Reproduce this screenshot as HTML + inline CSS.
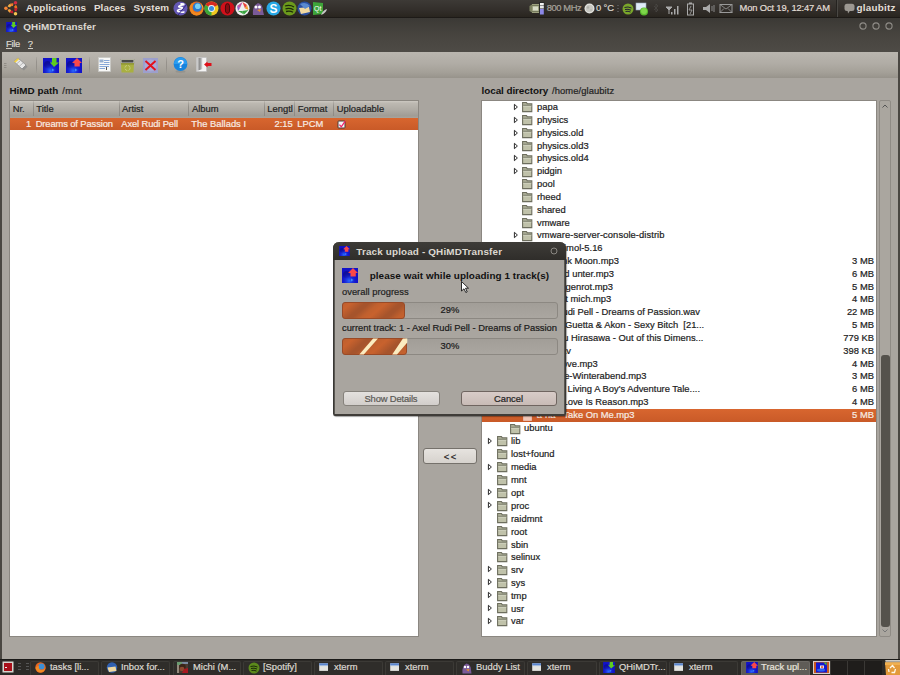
<!DOCTYPE html>
<html><head><meta charset="utf-8"><title>QHiMDTransfer</title>
<style>
html,body{margin:0;padding:0;}
body{width:900px;height:675px;overflow:hidden;position:relative;background:#a9a59f;font-family:"Liberation Sans",sans-serif;}
</style></head><body>
<div style="position:absolute;left:0px;top:0px;width:900px;height:17px;background:linear-gradient(#3d3a36,#332f2b 55%,#29251f);border-bottom:1px solid #1d1a17;"></div>
<svg style="position:absolute;left:4px;top:1px" width="16" height="16" viewBox="0 0 16 16"><path d="M4.82 6.03 A3.7 3.7 0 0 1 6.91 3.87" stroke="#f2ac44" stroke-width="2.7" fill="none"/><path d="M6.80 3.92 A3.7 3.7 0 0 1 9.20 3.71" stroke="#f07c2c" stroke-width="2.7" fill="none"/><path d="M10.96 4.73 A3.7 3.7 0 0 1 12.00 7.43" stroke="#ec7020" stroke-width="2.7" fill="none"/><path d="M12.00 7.17 A3.7 3.7 0 0 1 10.96 9.87" stroke="#c8202e" stroke-width="2.7" fill="none"/><path d="M9.20 10.89 A3.7 3.7 0 0 1 6.34 10.44" stroke="#c41c2c" stroke-width="2.7" fill="none"/><path d="M6.45 10.50 A3.7 3.7 0 0 1 4.78 8.44" stroke="#f0a040" stroke-width="2.7" fill="none"/><circle cx="1.90" cy="7.30" r="1.75" fill="#f88434"/><circle cx="11.50" cy="1.76" r="1.75" fill="#d42c44"/><circle cx="11.50" cy="12.84" r="1.75" fill="#f6c452"/></svg>
<div style="position:absolute;left:26.00px;top:2.00px;font-size:9.9px;line-height:12px;font-weight:700;color:#e2ded6;white-space:pre;letter-spacing:0.067px;">Applications</div>
<div style="position:absolute;left:94.00px;top:2.00px;font-size:9.9px;line-height:12px;font-weight:700;color:#e2ded6;white-space:pre;letter-spacing:0.037px;">Places</div>
<div style="position:absolute;left:133.50px;top:2.00px;font-size:9.9px;line-height:12px;font-weight:700;color:#e2ded6;white-space:pre;letter-spacing:0.072px;">System</div>
<svg style="position:absolute;left:173px;top:1px" width="15" height="15" viewBox="0 0 15 15"><circle cx="7.5" cy="7.5" r="7" fill="#6558b4"/><path d="M8 2.8 Q12 2.6 10.5 3.8 Q4.5 4.8 6 6 Q11 6.4 9 7.8 Q3 9 5 10.5 Q9 11.5 11 11" stroke="#fff" stroke-width="1.5" fill="none" stroke-linecap="round"/><path d="M5 14 L13.5 3.5" stroke="#2a2080" stroke-width=".9"/></svg>
<svg style="position:absolute;left:188.5px;top:1px" width="15" height="15" viewBox="0 0 15 15"><circle cx="7.5" cy="7.5" r="7" fill="#e86a1c"/><circle cx="8.3" cy="6.2" r="4.6" fill="#2a7ad0"/><circle cx="8.8" cy="5.2" r="2.8" fill="#7ad0f0"/><path d="M.6 6 Q1 13.8 7.5 14.5 Q13.5 14 14.5 8 L13.4 6.5 Q12.6 11.5 8 11.8 Q3.5 11.5 3.5 7 Q3 4 5.5 2.5 Q3 1.5 1.8 3.5Z" fill="#f08a20"/><path d="M14.5 8 Q14 4 12 2.5 L13.4 6.5Z" fill="#f4b030"/></svg>
<svg style="position:absolute;left:204px;top:1px" width="15" height="15" viewBox="0 0 15 15"><circle cx="7.5" cy="7.5" r="7" fill="#f0c820"/><path d="M7.5 7.5 L1.4 4 A7 7 0 0 1 13.6 4Z" fill="#d82a20"/><path d="M7.5 7.5 L7.5 14.5 A7 7 0 0 1 1.4 4Z" fill="#3aa83a"/><circle cx="7.5" cy="7.5" r="3.4" fill="#f4f4f4"/><circle cx="7.5" cy="7.5" r="2.5" fill="#3a8ce0"/></svg>
<svg style="position:absolute;left:220px;top:1px" width="15" height="15" viewBox="0 0 15 15"><circle cx="7.5" cy="7.5" r="7" fill="#d0101a"/><ellipse cx="7.5" cy="7.5" rx="2.6" ry="5.2" fill="#3a0a0a"/><ellipse cx="7.5" cy="7.5" rx="1.8" ry="4.6" fill="#8a0c12"/></svg>
<svg style="position:absolute;left:235px;top:1px" width="15" height="15" viewBox="0 0 15 15"><circle cx="7.5" cy="7.5" r="7" fill="#f0f0f0"/><path d="M7.5 1 L12 4 L10 7.5Z" fill="#e8453c"/><path d="M12 4 L13.5 9 L10 7.5Z" fill="#f4a030"/><path d="M13.5 9 L9 13.5 L7 10Z" fill="#3aa540"/><path d="M3 10 L9 13.5 L7 10Z" fill="#3aa540"/><path d="M2 5 L3 10 L5 7Z" fill="#8a60c8"/><path d="M2 5 L7.5 1 L5 7Z" fill="#c050a0"/></svg>
<svg style="position:absolute;left:251px;top:1px" width="14" height="15" viewBox="0 0 14 15"><path d="M2 14 Q1 5 7 2 Q12 3 12 10 L13 14Z" fill="#7a5a98"/><circle cx="5" cy="6" r="1.5" fill="#fff"/><circle cx="8.5" cy="6" r="1.5" fill="#fff"/><path d="M6 9 L10 8 L9 11Z" fill="#e8922a"/></svg>
<svg style="position:absolute;left:266px;top:1px" width="15" height="15" viewBox="0 0 15 15"><circle cx="7.5" cy="7.5" r="7" fill="#27a8e6"/><text x="7.5" y="11.8" font-size="12" font-weight="700" text-anchor="middle" fill="#fff" font-family="Liberation Sans">S</text></svg>
<svg style="position:absolute;left:282px;top:1px" width="15" height="15" viewBox="0 0 15 15"><circle cx="7.5" cy="7.5" r="7" fill="#6c9a1c"/><path d="M3 5 Q8 3.5 12 6 M3.5 7.8 Q8 6.7 11.5 8.8 M4 10.5 Q8 9.5 11 11.2" stroke="#1c2a08" stroke-width="1.3" fill="none"/></svg>
<svg style="position:absolute;left:297px;top:1px" width="15" height="15" viewBox="0 0 15 15"><circle cx="7.5" cy="7.5" r="7" fill="#2a4fa0"/><path d="M2 7 L12 6 L13 11 L4 13Z" fill="#f0d8a0"/><path d="M3 3 Q9 0 13 5 L8 8Z" fill="#5a8ad0"/></svg>
<svg style="position:absolute;left:313px;top:2px" width="15" height="14" viewBox="0 0 15 14"><path d="M0 0 L10 1 L10 12 L0 13Z" fill="#3ea53a"/><text x="1" y="9" font-size="7" fill="#fff" font-family="Liberation Sans">Qt</text><path d="M8 13 Q10 8 14 7 Q13 11 8 13Z" fill="#c8c8c8"/></svg>
<svg style="position:absolute;left:529px;top:1px" width="16" height="15" viewBox="0 0 16 15"><path d="M0.5 5 L3 3.5 L3 11.5 L0.5 10Z" fill="#7d8262"/><rect x="3" y="3" width="7.5" height="9" fill="#9ca07e"/><rect x="4" y="5.5" width="5" height="4" fill="#d8dcc8"/><path d="M3 4.5 H10.5 M3 10.5 H10.5" stroke="#6a6e52" stroke-width=".8"/><rect x="10" y="1" width="5.5" height="13" fill="#2a2a2a"/><rect x="11" y="2" width="3.8" height="2.5" fill="#f4f4f4"/><rect x="11" y="5" width="3.8" height="2.5" fill="#e8e8e8"/><rect x="11" y="8" width="3.8" height="5.5" fill="#8c88e8"/></svg>
<div style="position:absolute;left:546.70px;top:2.00px;font-size:9.4px;line-height:12px;font-weight:400;color:#a8a49c;white-space:pre;-webkit-text-stroke:0.2px #a8a49c;letter-spacing:-0.419px;">800 MHz</div>
<svg style="position:absolute;left:584px;top:3px" width="11" height="11" viewBox="0 0 11 11"><circle cx="5.5" cy="5.5" r="5" fill="#e4e4e0"/><circle cx="5.5" cy="5.5" r="3.8" fill="#c8c8c2"/><circle cx="4" cy="4.5" r="1.2" fill="#b0b0aa"/><circle cx="7" cy="7" r="1" fill="#b8b8b2"/></svg>
<div style="position:absolute;left:596.00px;top:2.00px;font-size:9.4px;line-height:12px;font-weight:400;color:#dcd8d0;white-space:pre;-webkit-text-stroke:0.2px #dcd8d0;letter-spacing:-0.115px;">0 °C</div>
<svg style="position:absolute;left:617px;top:5px" width="2" height="7" viewBox="0 0 2 7"><rect y="0" width="2" height="1" fill="#555"/><rect y="3" width="2" height="1" fill="#555"/><rect y="6" width="2" height="1" fill="#555"/></svg>
<svg style="position:absolute;left:621px;top:2px" width="14" height="14" viewBox="0 0 14 14"><circle cx="7" cy="7" r="5.5" fill="#7aa62a"/><path d="M3.5 5.5 Q7 4.2 10.5 6 M4 7.5 Q7 6.7 10 8.2 M4.5 9.5 Q7 8.8 9.5 10" stroke="#223" stroke-width="1" fill="none"/></svg>
<svg style="position:absolute;left:635px;top:2px" width="14" height="14" viewBox="0 0 14 14"><rect x="1" y="1" width="10" height="7" fill="#e0ecf8" stroke="#9ab" stroke-width=".6"/><circle cx="9" cy="9.5" r="4" fill="#5ab82e"/><circle cx="9" cy="9" r="3" fill="#7ed64a"/></svg>
<svg style="position:absolute;left:653px;top:3px" width="6" height="11" viewBox="0 0 6 11"><path d="M1 3 L5 7 L3 9 L3 1 L5 3 L1 7" stroke="#4a4844" stroke-width=".8" fill="none"/></svg>
<svg style="position:absolute;left:665px;top:4px" width="14" height="11" viewBox="0 0 14 11"><path d="M1 3 L7 3 L4 6Z M4 6 L4 10" stroke="#aaa" fill="#aaa" stroke-width="1"/><rect x="6" y="8" width="1.5" height="2.5" fill="#aaa"/><rect x="9" y="5" width="1.5" height="5.5" fill="#aaa"/><rect x="12" y="2" width="1.5" height="8.5" fill="#aaa"/></svg>
<svg style="position:absolute;left:686px;top:2px" width="9" height="14" viewBox="0 0 9 14"><rect x="1.5" y="2" width="6" height="11" fill="none" stroke="#aaa" stroke-width="1"/><rect x="3" y="0.5" width="3" height="1.5" fill="#aaa"/><path d="M5 4 L3 8 L6 8 L4 12" stroke="#aaa" fill="none" stroke-width=".8"/></svg>
<svg style="position:absolute;left:702px;top:3px" width="14" height="11" viewBox="0 0 14 11"><path d="M1 4 L4 4 L8 1 L8 10 L4 7 L1 7Z" fill="#aaa"/><path d="M10 3 L10 8 M12 2 L12 9" stroke="#888" stroke-width="1"/></svg>
<svg style="position:absolute;left:719px;top:3px" width="14" height="11" viewBox="0 0 14 11"><rect x="1" y="1.5" width="12" height="8" fill="none" stroke="#999" stroke-width="1"/><path d="M1 1.5 L7 6 L13 1.5 M1 9.5 L5 5.5 M13 9.5 L9 5.5" stroke="#999" stroke-width=".8" fill="none"/></svg>
<div style="position:absolute;left:739.50px;top:2.00px;font-size:9.4px;line-height:12px;font-weight:400;color:#e2ded6;white-space:pre;-webkit-text-stroke:0.2px #e2ded6;letter-spacing:-0.146px;">Mon Oct 19, 12:47 AM</div>
<div style="position:absolute;left:836px;top:0px;width:1px;height:17px;background:#252320;border-right:1px solid #4a4844;"></div>
<svg style="position:absolute;left:844px;top:3px" width="11" height="11" viewBox="0 0 11 11"><rect x=".5" y=".8" width="10" height="7.2" rx="2.5" fill="#9c9892"/><path d="M3.5 7 L6.5 7 L4 10.5Z" fill="#9c9892"/></svg>
<div style="position:absolute;left:856.50px;top:2.00px;font-size:9.9px;line-height:12px;font-weight:700;color:#e2ded6;white-space:pre;letter-spacing:0.241px;">glaubitz</div>
<div style="position:absolute;left:0px;top:18px;width:900px;height:34px;background:linear-gradient(#3b3935,#47443f 50%,#4e4b46);"></div>
<svg style="position:absolute;left:6px;top:22px" width="11" height="10" viewBox="0 0 16 15"><defs><radialGradient id="hb6_22" cx=".45" cy=".85" r=".55"><stop offset="0" stop-color="#2a6cff"/><stop offset="1" stop-color="#1010d0" stop-opacity="0"/></radialGradient></defs><rect width="16" height="15" fill="#1212c8"/><ellipse cx="4.5" cy="6.5" rx="3.5" ry="3.5" fill="#0c0c80" opacity=".6"/><ellipse cx="10" cy="4" rx="3" ry="2.5" fill="#2a3ae0" opacity=".6"/><rect width="16" height="15" fill="url(#hb6_22)"/><path d="M9 10.5 L11.5 12 L9 13.5Z" fill="#4aa0ff" opacity=".8"/><path d="M9 0 L13.5 0 L13.5 4.5 L16 4.5 L11 9 L7 4.5 L9 4.5Z" fill="#5ecc20"/></svg>
<div style="position:absolute;left:23.30px;top:21.00px;font-size:9.9px;line-height:12px;font-weight:700;color:#dcd8d0;white-space:pre;letter-spacing:0.051px;">QHiMDTransfer</div>
<svg style="position:absolute;left:858.3px;top:21.3px" width="10" height="10" viewBox="0 0 10 10"><circle cx="5" cy="5" r="3.1" fill="none" stroke="#8e8b86" stroke-width="1.1"/></svg>
<svg style="position:absolute;left:871.2px;top:21.3px" width="10" height="10" viewBox="0 0 10 10"><circle cx="5" cy="5" r="3.1" fill="none" stroke="#8e8b86" stroke-width="1.1"/></svg>
<svg style="position:absolute;left:884.1px;top:21.3px" width="10" height="10" viewBox="0 0 10 10"><circle cx="5" cy="5" r="3.1" fill="none" stroke="#8e8b86" stroke-width="1.1"/></svg>
<div style="position:absolute;left:6.10px;top:38.00px;font-size:9.4px;line-height:12px;font-weight:400;color:#dcd8d0;white-space:pre;-webkit-text-stroke:0.2px #dcd8d0;letter-spacing:-0.370px;">File</div>
<div style="position:absolute;left:6px;top:48px;width:6px;height:1px;background:#cfcbc3;"></div>
<div style="position:absolute;left:27.80px;top:38.00px;font-size:9.4px;line-height:12px;font-weight:400;color:#dcd8d0;white-space:pre;-webkit-text-stroke:0.2px #dcd8d0;">?</div>
<div style="position:absolute;left:28px;top:48px;width:5px;height:1px;background:#cfcbc3;"></div>
<div style="position:absolute;left:0px;top:52px;width:2px;height:607px;background:#4a4742;"></div>
<div style="position:absolute;left:898px;top:52px;width:2px;height:607px;background:#4a4742;"></div>
<div style="position:absolute;left:2px;top:52px;width:896px;height:26px;background:linear-gradient(#bab6af,#b0aca5 45%,#a39f97 80%,#97938b);"></div>
<svg style="position:absolute;left:4px;top:62px" width="3" height="7" viewBox="0 0 3 7"><rect x="0" y="1" width="2.5" height=".8" fill="#8a867f"/><rect x="0" y="3" width="2.5" height=".8" fill="#8a867f"/><rect x="0" y="5" width="2.5" height=".8" fill="#8a867f"/></svg>
<svg style="position:absolute;left:13px;top:57px" width="15" height="14" viewBox="0 0 15 14"><path d="M1 4.5 L5 1 L13 8 L9 12Z" fill="#e8e8e8" stroke="#8a8a8a" stroke-width=".8"/><path d="M1 4.5 L5 1 L6.2 2.2 L2.2 5.8Z" fill="#f2d040"/><path d="M3.5 7 L7.5 3.5 M6 9.5 L10 6" stroke="#a8a8a8" stroke-width=".8"/><path d="M9 12 L13 8 L14.5 9.8 L10.8 13.5Z" fill="#8a8a8a" opacity=".8"/></svg>
<div style="position:absolute;left:36px;top:57px;width:1px;height:16px;background:linear-gradient(rgba(143,139,133,.2),rgba(143,139,133,.8) 30%,rgba(143,139,133,.8) 70%,rgba(143,139,133,.2));"></div>
<svg style="position:absolute;left:43px;top:58px" width="16" height="15" viewBox="0 0 16 15"><defs><radialGradient id="hb43_58" cx=".45" cy=".85" r=".55"><stop offset="0" stop-color="#2a6cff"/><stop offset="1" stop-color="#1010d0" stop-opacity="0"/></radialGradient></defs><rect width="16" height="15" fill="#1212c8"/><ellipse cx="4.5" cy="6.5" rx="3.5" ry="3.5" fill="#0c0c80" opacity=".6"/><ellipse cx="10" cy="4" rx="3" ry="2.5" fill="#2a3ae0" opacity=".6"/><rect width="16" height="15" fill="url(#hb43_58)"/><path d="M9 10.5 L11.5 12 L9 13.5Z" fill="#4aa0ff" opacity=".8"/><path d="M9 0 L13.5 0 L13.5 4.5 L16 4.5 L11 9 L7 4.5 L9 4.5Z" fill="#5ecc20"/></svg>
<svg style="position:absolute;left:66px;top:58px" width="16" height="15" viewBox="0 0 16 15"><defs><radialGradient id="hb66_58" cx=".45" cy=".85" r=".55"><stop offset="0" stop-color="#2a6cff"/><stop offset="1" stop-color="#1010d0" stop-opacity="0"/></radialGradient></defs><rect width="16" height="15" fill="#1212c8"/><ellipse cx="4.5" cy="6.5" rx="3.5" ry="3.5" fill="#0c0c80" opacity=".6"/><ellipse cx="10" cy="4" rx="3" ry="2.5" fill="#2a3ae0" opacity=".6"/><rect width="16" height="15" fill="url(#hb66_58)"/><path d="M9 10.5 L11.5 12 L9 13.5Z" fill="#4aa0ff" opacity=".8"/><path d="M11 0 L16 5 L13.8 5 L13.8 8.5 L8.5 8.5 L8.5 5 L6 5Z" fill="#fa4848"/></svg>
<div style="position:absolute;left:89px;top:57px;width:1px;height:16px;background:linear-gradient(rgba(143,139,133,.2),rgba(143,139,133,.8) 30%,rgba(143,139,133,.8) 70%,rgba(143,139,133,.2));"></div>
<svg style="position:absolute;left:98px;top:57px" width="13" height="15" viewBox="0 0 13 15"><rect x=".5" y=".5" width="12" height="14" fill="#f8f8f6" stroke="#c8c8c4" stroke-width=".8"/><rect x="1.5" y="2.5" width="4" height="3" fill="#98b0d0"/><path d="M6 3.5 H11.5 M6 5.5 H11.5 M1.5 7.5 H11.5 M1.5 9.5 H11 M1.5 11.5 H7" stroke="#88a8d8" stroke-width="1.1"/><path d="M8.5 10 V13" stroke="#444" stroke-width=".9"/></svg>
<svg style="position:absolute;left:119.5px;top:58.5px" width="15" height="14" viewBox="0 0 15 14"><rect x=".3" y=".3" width="14.4" height="4" rx="1" fill="#d0d0c8" stroke="#8a8a70" stroke-width=".5"/><rect x="1.5" y="1" width="12" height="2.5" fill="#4a4a48"/><path d="M1 4.3 L14 4.3 L13.5 13.5 L1.5 13.5Z" fill="#a9b040"/><path d="M1 4.3 L14 4.3 L14 5.5 L1 5.5Z" fill="#8a9030"/><circle cx="7.5" cy="9" r="2.6" fill="none" stroke="#c8cc88" stroke-width=".9" stroke-dasharray="3 1.2"/></svg>
<svg style="position:absolute;left:143px;top:58px" width="15" height="15" viewBox="0 0 15 15"><rect width="15" height="15" fill="#9c9fcc"/><circle cx="7.5" cy="7.5" r="6" fill="#a9acd6"/><path d="M2.5 3 L12.5 12 M12.5 3 L2.5 12" stroke="#e4101c" stroke-width="1.9"/></svg>
<div style="position:absolute;left:166px;top:57px;width:1px;height:16px;background:linear-gradient(rgba(143,139,133,.2),rgba(143,139,133,.8) 30%,rgba(143,139,133,.8) 70%,rgba(143,139,133,.2));"></div>
<svg style="position:absolute;left:173px;top:57px" width="15" height="16" viewBox="0 0 15 16"><ellipse cx="7.5" cy="14.5" rx="5" ry="1.2" fill="#777" opacity=".35"/><circle cx="7.5" cy="7" r="6.9" fill="#1684de"/><path d="M1 7 A6.5 6.5 0 0 1 14 7Z" fill="#2a9cf0"/><text x="7.6" y="11.2" font-size="11" font-weight="700" text-anchor="middle" fill="#fff" font-family="Liberation Sans">?</text></svg>
<svg style="position:absolute;left:196px;top:57px" width="16" height="15" viewBox="0 0 16 15"><defs><linearGradient id="dg" x1="0" x2="1"><stop offset="0" stop-color="#d8d8d8"/><stop offset=".5" stop-color="#8a8a8a"/><stop offset="1" stop-color="#e0e0e0"/></linearGradient></defs><path d="M.5 .5 L10.5 .5 L10.5 14.5 L.5 14.5Z" fill="#f4f4f4" stroke="#bbb" stroke-width=".6"/><path d="M1 1 L6.5 1 L6.5 12 L1 14Z" fill="url(#dg)"/><path d="M8 7.5 L11.5 4.5 L11.5 6 L15.5 6 L15.5 9 L11.5 9 L11.5 10.5Z" fill="#e0101a"/></svg>
<div style="position:absolute;left:9.40px;top:85.00px;font-size:9.9px;line-height:12px;font-weight:700;color:#111;white-space:pre;letter-spacing:0.021px;">HiMD path</div>
<div style="position:absolute;left:62.20px;top:85.00px;font-size:9.4px;line-height:12px;font-weight:400;color:#222;white-space:pre;-webkit-text-stroke:0.2px #222;letter-spacing:0.422px;">/mnt</div>
<div style="position:absolute;left:481.60px;top:85.00px;font-size:9.9px;line-height:12px;font-weight:700;color:#111;white-space:pre;letter-spacing:-0.065px;">local directory</div>
<div style="position:absolute;left:552.10px;top:85.00px;font-size:9.4px;line-height:12px;font-weight:400;color:#222;white-space:pre;-webkit-text-stroke:0.2px #222;letter-spacing:0.078px;">/home/glaubitz</div>
<div style="position:absolute;left:9px;top:100px;width:410px;height:537px;box-sizing:border-box;background:#fff;border:1px solid #8b8781;"></div>
<div style="position:absolute;left:10px;top:101px;width:408px;height:17px;background:linear-gradient(#cdc9c2,#bdb9b2 12%,#aeaaa3 55%,#a09c95 88%,#a8a49d);"></div>
<div style="position:absolute;left:33px;top:101px;width:1px;height:15px;background:linear-gradient(rgba(140,136,130,.2),rgba(135,131,125,.75) 40%,rgba(135,131,125,.75));"></div>
<div style="position:absolute;left:119px;top:101px;width:1px;height:15px;background:linear-gradient(rgba(140,136,130,.2),rgba(135,131,125,.75) 40%,rgba(135,131,125,.75));"></div>
<div style="position:absolute;left:188px;top:101px;width:1px;height:15px;background:linear-gradient(rgba(140,136,130,.2),rgba(135,131,125,.75) 40%,rgba(135,131,125,.75));"></div>
<div style="position:absolute;left:263.5px;top:101px;width:1px;height:15px;background:linear-gradient(rgba(140,136,130,.2),rgba(135,131,125,.75) 40%,rgba(135,131,125,.75));"></div>
<div style="position:absolute;left:294px;top:101px;width:1px;height:15px;background:linear-gradient(rgba(140,136,130,.2),rgba(135,131,125,.75) 40%,rgba(135,131,125,.75));"></div>
<div style="position:absolute;left:333px;top:101px;width:1px;height:15px;background:linear-gradient(rgba(140,136,130,.2),rgba(135,131,125,.75) 40%,rgba(135,131,125,.75));"></div>
<div style="position:absolute;left:12.70px;top:103.00px;font-size:9.4px;line-height:12px;font-weight:400;color:#232323;white-space:pre;-webkit-text-stroke:0.2px #232323;">Nr.</div>
<div style="position:absolute;left:36.30px;top:103.00px;font-size:9.4px;line-height:12px;font-weight:400;color:#232323;white-space:pre;-webkit-text-stroke:0.2px #232323;">Title</div>
<div style="position:absolute;left:122.00px;top:103.00px;font-size:9.4px;line-height:12px;font-weight:400;color:#232323;white-space:pre;-webkit-text-stroke:0.2px #232323;">Artist</div>
<div style="position:absolute;left:192.00px;top:103.00px;font-size:9.4px;line-height:12px;font-weight:400;color:#232323;white-space:pre;-webkit-text-stroke:0.2px #232323;">Album</div>
<div style="position:absolute;left:267.30px;top:103.00px;font-size:9.4px;line-height:12px;font-weight:400;color:#232323;white-space:pre;-webkit-text-stroke:0.2px #232323;">Lengtl</div>
<div style="position:absolute;left:297.70px;top:103.00px;font-size:9.4px;line-height:12px;font-weight:400;color:#232323;white-space:pre;-webkit-text-stroke:0.2px #232323;">Format</div>
<div style="position:absolute;left:336.70px;top:103.00px;font-size:9.4px;line-height:12px;font-weight:400;color:#232323;white-space:pre;-webkit-text-stroke:0.2px #232323;">Uploadable</div>
<div style="position:absolute;left:10px;top:117.5px;width:408px;height:12.6px;background:linear-gradient(#d8662f,#c95a28);"></div>
<div style="position:absolute;left:25.98px;top:118.00px;font-size:9.4px;line-height:12px;font-weight:400;color:#f7ece4;white-space:pre;-webkit-text-stroke:0.2px #f7ece4;">1</div>
<div style="position:absolute;left:35.70px;top:118.00px;font-size:9.4px;line-height:12px;font-weight:400;color:#f7ece4;white-space:pre;-webkit-text-stroke:0.2px #f7ece4;letter-spacing:-0.119px;">Dreams of Passion</div>
<div style="position:absolute;left:121.30px;top:118.00px;font-size:9.4px;line-height:12px;font-weight:400;color:#f7ece4;white-space:pre;-webkit-text-stroke:0.2px #f7ece4;letter-spacing:-0.129px;">Axel Rudi Pell</div>
<div style="position:absolute;left:191.30px;top:118.00px;font-size:9.4px;line-height:12px;font-weight:400;color:#f7ece4;white-space:pre;-webkit-text-stroke:0.2px #f7ece4;">The Ballads I</div>
<div style="position:absolute;left:274.45px;top:118.00px;font-size:9.4px;line-height:12px;font-weight:400;color:#f7ece4;white-space:pre;-webkit-text-stroke:0.2px #f7ece4;">2:15</div>
<div style="position:absolute;left:297.30px;top:118.00px;font-size:9.4px;line-height:12px;font-weight:400;color:#f7ece4;white-space:pre;-webkit-text-stroke:0.2px #f7ece4;">LPCM</div>
<svg style="position:absolute;left:337px;top:119.8px" width="9" height="9" viewBox="0 0 9 9"><rect x="1" y="1" width="7" height="7" rx=".8" fill="#f4f6f6" stroke="#4a3a36" stroke-width="1"/><path d="M2.4 4.6 L4.3 6.8 L8.2 1.2" stroke="#f0206a" stroke-width="1.3" fill="none"/></svg>
<div style="position:absolute;left:481px;top:100px;width:396px;height:537px;box-sizing:border-box;background:#fff;border:1px solid #8b8781;"></div>
<svg style="position:absolute;left:513px;top:103.0px" width="6" height="9" viewBox="0 0 6 9"><path d="M1.4 1.3 L4.4 4 L1.4 6.7Z" fill="#fff" stroke="#2a2a2a" stroke-width="1" stroke-linejoin="round"/></svg>
<svg style="position:absolute;left:522.2px;top:102.4px" width="11" height="11" viewBox="0 0 11 11"><path d="M.6 9.6 L.6 .6 L4.4 .6 L5.4 1.9 L9.8 1.9 L9.8 9.6Z" fill="#c0c2aa" stroke="#6d6e5e" stroke-width="1.1"/><rect x="1.1" y="2.4" width="8.2" height="1.7" fill="#8e907d"/><rect x="1.1" y="4.1" width="8.2" height=".6" fill="#d8dac8"/></svg>
<div style="position:absolute;left:537.00px;top:101.00px;font-size:9.4px;line-height:12px;font-weight:400;color:#1c1c1c;white-space:pre;-webkit-text-stroke:0.2px #1c1c1c;">papa</div>
<svg style="position:absolute;left:513px;top:115.845px" width="6" height="9" viewBox="0 0 6 9"><path d="M1.4 1.3 L4.4 4 L1.4 6.7Z" fill="#fff" stroke="#2a2a2a" stroke-width="1" stroke-linejoin="round"/></svg>
<svg style="position:absolute;left:522.2px;top:115.245px" width="11" height="11" viewBox="0 0 11 11"><path d="M.6 9.6 L.6 .6 L4.4 .6 L5.4 1.9 L9.8 1.9 L9.8 9.6Z" fill="#c0c2aa" stroke="#6d6e5e" stroke-width="1.1"/><rect x="1.1" y="2.4" width="8.2" height="1.7" fill="#8e907d"/><rect x="1.1" y="4.1" width="8.2" height=".6" fill="#d8dac8"/></svg>
<div style="position:absolute;left:537.00px;top:114.00px;font-size:9.4px;line-height:12px;font-weight:400;color:#1c1c1c;white-space:pre;-webkit-text-stroke:0.2px #1c1c1c;">physics</div>
<svg style="position:absolute;left:513px;top:128.69px" width="6" height="9" viewBox="0 0 6 9"><path d="M1.4 1.3 L4.4 4 L1.4 6.7Z" fill="#fff" stroke="#2a2a2a" stroke-width="1" stroke-linejoin="round"/></svg>
<svg style="position:absolute;left:522.2px;top:128.09px" width="11" height="11" viewBox="0 0 11 11"><path d="M.6 9.6 L.6 .6 L4.4 .6 L5.4 1.9 L9.8 1.9 L9.8 9.6Z" fill="#c0c2aa" stroke="#6d6e5e" stroke-width="1.1"/><rect x="1.1" y="2.4" width="8.2" height="1.7" fill="#8e907d"/><rect x="1.1" y="4.1" width="8.2" height=".6" fill="#d8dac8"/></svg>
<div style="position:absolute;left:537.00px;top:127.00px;font-size:9.4px;line-height:12px;font-weight:400;color:#1c1c1c;white-space:pre;-webkit-text-stroke:0.2px #1c1c1c;">physics.old</div>
<svg style="position:absolute;left:513px;top:141.535px" width="6" height="9" viewBox="0 0 6 9"><path d="M1.4 1.3 L4.4 4 L1.4 6.7Z" fill="#fff" stroke="#2a2a2a" stroke-width="1" stroke-linejoin="round"/></svg>
<svg style="position:absolute;left:522.2px;top:140.935px" width="11" height="11" viewBox="0 0 11 11"><path d="M.6 9.6 L.6 .6 L4.4 .6 L5.4 1.9 L9.8 1.9 L9.8 9.6Z" fill="#c0c2aa" stroke="#6d6e5e" stroke-width="1.1"/><rect x="1.1" y="2.4" width="8.2" height="1.7" fill="#8e907d"/><rect x="1.1" y="4.1" width="8.2" height=".6" fill="#d8dac8"/></svg>
<div style="position:absolute;left:537.00px;top:140.00px;font-size:9.4px;line-height:12px;font-weight:400;color:#1c1c1c;white-space:pre;-webkit-text-stroke:0.2px #1c1c1c;">physics.old3</div>
<svg style="position:absolute;left:513px;top:154.38px" width="6" height="9" viewBox="0 0 6 9"><path d="M1.4 1.3 L4.4 4 L1.4 6.7Z" fill="#fff" stroke="#2a2a2a" stroke-width="1" stroke-linejoin="round"/></svg>
<svg style="position:absolute;left:522.2px;top:153.78px" width="11" height="11" viewBox="0 0 11 11"><path d="M.6 9.6 L.6 .6 L4.4 .6 L5.4 1.9 L9.8 1.9 L9.8 9.6Z" fill="#c0c2aa" stroke="#6d6e5e" stroke-width="1.1"/><rect x="1.1" y="2.4" width="8.2" height="1.7" fill="#8e907d"/><rect x="1.1" y="4.1" width="8.2" height=".6" fill="#d8dac8"/></svg>
<div style="position:absolute;left:537.00px;top:152.00px;font-size:9.4px;line-height:12px;font-weight:400;color:#1c1c1c;white-space:pre;-webkit-text-stroke:0.2px #1c1c1c;">physics.old4</div>
<svg style="position:absolute;left:513px;top:167.22500000000002px" width="6" height="9" viewBox="0 0 6 9"><path d="M1.4 1.3 L4.4 4 L1.4 6.7Z" fill="#fff" stroke="#2a2a2a" stroke-width="1" stroke-linejoin="round"/></svg>
<svg style="position:absolute;left:522.2px;top:166.625px" width="11" height="11" viewBox="0 0 11 11"><path d="M.6 9.6 L.6 .6 L4.4 .6 L5.4 1.9 L9.8 1.9 L9.8 9.6Z" fill="#c0c2aa" stroke="#6d6e5e" stroke-width="1.1"/><rect x="1.1" y="2.4" width="8.2" height="1.7" fill="#8e907d"/><rect x="1.1" y="4.1" width="8.2" height=".6" fill="#d8dac8"/></svg>
<div style="position:absolute;left:537.00px;top:165.00px;font-size:9.4px;line-height:12px;font-weight:400;color:#1c1c1c;white-space:pre;-webkit-text-stroke:0.2px #1c1c1c;">pidgin</div>
<svg style="position:absolute;left:522.2px;top:179.47000000000003px" width="11" height="11" viewBox="0 0 11 11"><path d="M.6 9.6 L.6 .6 L4.4 .6 L5.4 1.9 L9.8 1.9 L9.8 9.6Z" fill="#c0c2aa" stroke="#6d6e5e" stroke-width="1.1"/><rect x="1.1" y="2.4" width="8.2" height="1.7" fill="#8e907d"/><rect x="1.1" y="4.1" width="8.2" height=".6" fill="#d8dac8"/></svg>
<div style="position:absolute;left:537.00px;top:178.00px;font-size:9.4px;line-height:12px;font-weight:400;color:#1c1c1c;white-space:pre;-webkit-text-stroke:0.2px #1c1c1c;">pool</div>
<svg style="position:absolute;left:522.2px;top:192.315px" width="11" height="11" viewBox="0 0 11 11"><path d="M.6 9.6 L.6 .6 L4.4 .6 L5.4 1.9 L9.8 1.9 L9.8 9.6Z" fill="#c0c2aa" stroke="#6d6e5e" stroke-width="1.1"/><rect x="1.1" y="2.4" width="8.2" height="1.7" fill="#8e907d"/><rect x="1.1" y="4.1" width="8.2" height=".6" fill="#d8dac8"/></svg>
<div style="position:absolute;left:537.00px;top:191.00px;font-size:9.4px;line-height:12px;font-weight:400;color:#1c1c1c;white-space:pre;-webkit-text-stroke:0.2px #1c1c1c;">rheed</div>
<svg style="position:absolute;left:522.2px;top:205.16000000000003px" width="11" height="11" viewBox="0 0 11 11"><path d="M.6 9.6 L.6 .6 L4.4 .6 L5.4 1.9 L9.8 1.9 L9.8 9.6Z" fill="#c0c2aa" stroke="#6d6e5e" stroke-width="1.1"/><rect x="1.1" y="2.4" width="8.2" height="1.7" fill="#8e907d"/><rect x="1.1" y="4.1" width="8.2" height=".6" fill="#d8dac8"/></svg>
<div style="position:absolute;left:537.00px;top:204.00px;font-size:9.4px;line-height:12px;font-weight:400;color:#1c1c1c;white-space:pre;-webkit-text-stroke:0.2px #1c1c1c;">shared</div>
<svg style="position:absolute;left:522.2px;top:218.005px" width="11" height="11" viewBox="0 0 11 11"><path d="M.6 9.6 L.6 .6 L4.4 .6 L5.4 1.9 L9.8 1.9 L9.8 9.6Z" fill="#c0c2aa" stroke="#6d6e5e" stroke-width="1.1"/><rect x="1.1" y="2.4" width="8.2" height="1.7" fill="#8e907d"/><rect x="1.1" y="4.1" width="8.2" height=".6" fill="#d8dac8"/></svg>
<div style="position:absolute;left:537.00px;top:217.00px;font-size:9.4px;line-height:12px;font-weight:400;color:#1c1c1c;white-space:pre;-webkit-text-stroke:0.2px #1c1c1c;">vmware</div>
<svg style="position:absolute;left:513px;top:231.45000000000002px" width="6" height="9" viewBox="0 0 6 9"><path d="M1.4 1.3 L4.4 4 L1.4 6.7Z" fill="#fff" stroke="#2a2a2a" stroke-width="1" stroke-linejoin="round"/></svg>
<svg style="position:absolute;left:522.2px;top:230.85000000000002px" width="11" height="11" viewBox="0 0 11 11"><path d="M.6 9.6 L.6 .6 L4.4 .6 L5.4 1.9 L9.8 1.9 L9.8 9.6Z" fill="#c0c2aa" stroke="#6d6e5e" stroke-width="1.1"/><rect x="1.1" y="2.4" width="8.2" height="1.7" fill="#8e907d"/><rect x="1.1" y="4.1" width="8.2" height=".6" fill="#d8dac8"/></svg>
<div style="position:absolute;left:537.00px;top:229.00px;font-size:9.4px;line-height:12px;font-weight:400;color:#1c1c1c;white-space:pre;-webkit-text-stroke:0.2px #1c1c1c;letter-spacing:0.069px;">vmware-server-console-distrib</div>
<svg style="position:absolute;left:522.2px;top:243.69500000000002px" width="11" height="11" viewBox="0 0 11 11"><path d="M.6 9.6 L.6 .6 L4.4 .6 L5.4 1.9 L9.8 1.9 L9.8 9.6Z" fill="#c0c2aa" stroke="#6d6e5e" stroke-width="1.1"/><rect x="1.1" y="2.4" width="8.2" height="1.7" fill="#8e907d"/><rect x="1.1" y="4.1" width="8.2" height=".6" fill="#d8dac8"/></svg>
<div style="position:absolute;left:564.04px;top:242.00px;font-size:9.4px;line-height:12px;font-weight:400;color:#1c1c1c;white-space:pre;-webkit-text-stroke:0.2px #1c1c1c;">jmol-5.16</div>
<svg style="position:absolute;left:523px;top:256.04px" width="9" height="11" viewBox="0 0 9 11"><path d="M.5 .5 L6 .5 L8.5 3 L8.5 10.5 L.5 10.5Z" fill="#fafafa" stroke="#999" stroke-width="1"/></svg>
<div style="position:absolute;left:499.59px;top:255.00px;font-size:9.4px;line-height:12px;font-weight:400;color:#1c1c1c;white-space:pre;-webkit-text-stroke:0.2px #1c1c1c;">Nick Drake - Pink Moon.mp3</div>
<div style="position:absolute;left:852.11px;top:255.00px;font-size:9.4px;line-height:12px;font-weight:400;color:#1c1c1c;white-space:pre;-webkit-text-stroke:0.2px #1c1c1c;">3 MB</div>
<svg style="position:absolute;left:523px;top:268.885px" width="9" height="11" viewBox="0 0 9 11"><path d="M.5 .5 L6 .5 L8.5 3 L8.5 10.5 L.5 10.5Z" fill="#fafafa" stroke="#999" stroke-width="1"/></svg>
<div style="position:absolute;left:482.06px;top:268.00px;font-size:9.4px;line-height:12px;font-weight:400;color:#1c1c1c;white-space:pre;-webkit-text-stroke:0.2px #1c1c1c;">Rammstein - Auf und unter.mp3</div>
<div style="position:absolute;left:852.11px;top:268.00px;font-size:9.4px;line-height:12px;font-weight:400;color:#1c1c1c;white-space:pre;-webkit-text-stroke:0.2px #1c1c1c;">6 MB</div>
<svg style="position:absolute;left:523px;top:281.73px" width="9" height="11" viewBox="0 0 9 11"><path d="M.5 .5 L6 .5 L8.5 3 L8.5 10.5 L.5 10.5Z" fill="#fafafa" stroke="#999" stroke-width="1"/></svg>
<div style="position:absolute;left:493.69px;top:281.00px;font-size:9.4px;line-height:12px;font-weight:400;color:#1c1c1c;white-space:pre;-webkit-text-stroke:0.2px #1c1c1c;">Rammstein - Morgenrot.mp3</div>
<div style="position:absolute;left:852.11px;top:281.00px;font-size:9.4px;line-height:12px;font-weight:400;color:#1c1c1c;white-space:pre;-webkit-text-stroke:0.2px #1c1c1c;">5 MB</div>
<svg style="position:absolute;left:523px;top:294.57500000000005px" width="9" height="11" viewBox="0 0 9 11"><path d="M.5 .5 L6 .5 L8.5 3 L8.5 10.5 L.5 10.5Z" fill="#fafafa" stroke="#999" stroke-width="1"/></svg>
<div style="position:absolute;left:491.89px;top:293.00px;font-size:9.4px;line-height:12px;font-weight:400;color:#1c1c1c;white-space:pre;-webkit-text-stroke:0.2px #1c1c1c;">Rammstein - Liebt mich.mp3</div>
<div style="position:absolute;left:852.11px;top:293.00px;font-size:9.4px;line-height:12px;font-weight:400;color:#1c1c1c;white-space:pre;-webkit-text-stroke:0.2px #1c1c1c;">4 MB</div>
<svg style="position:absolute;left:523px;top:307.42px" width="9" height="11" viewBox="0 0 9 11"><path d="M.5 .5 L6 .5 L8.5 3 L8.5 10.5 L.5 10.5Z" fill="#fafafa" stroke="#999" stroke-width="1"/></svg>
<div style="position:absolute;left:534.83px;top:306.00px;font-size:9.4px;line-height:12px;font-weight:400;color:#1c1c1c;white-space:pre;-webkit-text-stroke:0.2px #1c1c1c;">Axel Rudi Pell - Dreams of Passion.wav</div>
<div style="position:absolute;left:846.89px;top:306.00px;font-size:9.4px;line-height:12px;font-weight:400;color:#1c1c1c;white-space:pre;-webkit-text-stroke:0.2px #1c1c1c;">22 MB</div>
<svg style="position:absolute;left:523px;top:320.265px" width="9" height="11" viewBox="0 0 9 11"><path d="M.5 .5 L6 .5 L8.5 3 L8.5 10.5 L.5 10.5Z" fill="#fafafa" stroke="#999" stroke-width="1"/></svg>
<div style="position:absolute;left:538.48px;top:319.00px;font-size:9.4px;line-height:12px;font-weight:400;color:#1c1c1c;white-space:pre;-webkit-text-stroke:0.2px #1c1c1c;">David Guetta &amp; Akon - Sexy Bitch  [21...</div>
<div style="position:absolute;left:852.11px;top:319.00px;font-size:9.4px;line-height:12px;font-weight:400;color:#1c1c1c;white-space:pre;-webkit-text-stroke:0.2px #1c1c1c;">5 MB</div>
<svg style="position:absolute;left:523px;top:333.11px" width="9" height="11" viewBox="0 0 9 11"><path d="M.5 .5 L6 .5 L8.5 3 L8.5 10.5 L.5 10.5Z" fill="#fafafa" stroke="#999" stroke-width="1"/></svg>
<div style="position:absolute;left:534.07px;top:332.00px;font-size:9.4px;line-height:12px;font-weight:400;color:#1c1c1c;white-space:pre;-webkit-text-stroke:0.2px #1c1c1c;">Susumu Hirasawa - Out of this Dimens...</div>
<div style="position:absolute;left:843.23px;top:332.00px;font-size:9.4px;line-height:12px;font-weight:400;color:#1c1c1c;white-space:pre;-webkit-text-stroke:0.2px #1c1c1c;">779 KB</div>
<svg style="position:absolute;left:523px;top:345.95500000000004px" width="9" height="11" viewBox="0 0 9 11"><path d="M.5 .5 L6 .5 L8.5 3 L8.5 10.5 L.5 10.5Z" fill="#fafafa" stroke="#999" stroke-width="1"/></svg>
<div style="position:absolute;left:531.41px;top:345.00px;font-size:9.4px;line-height:12px;font-weight:400;color:#1c1c1c;white-space:pre;-webkit-text-stroke:0.2px #1c1c1c;">track.wav</div>
<div style="position:absolute;left:843.23px;top:345.00px;font-size:9.4px;line-height:12px;font-weight:400;color:#1c1c1c;white-space:pre;-webkit-text-stroke:0.2px #1c1c1c;">398 KB</div>
<svg style="position:absolute;left:523px;top:358.80000000000007px" width="9" height="11" viewBox="0 0 9 11"><path d="M.5 .5 L6 .5 L8.5 3 L8.5 10.5 L.5 10.5Z" fill="#fafafa" stroke="#999" stroke-width="1"/></svg>
<div style="position:absolute;left:556.63px;top:358.00px;font-size:9.4px;line-height:12px;font-weight:400;color:#1c1c1c;white-space:pre;-webkit-text-stroke:0.2px #1c1c1c;">Love.mp3</div>
<div style="position:absolute;left:852.11px;top:358.00px;font-size:9.4px;line-height:12px;font-weight:400;color:#1c1c1c;white-space:pre;-webkit-text-stroke:0.2px #1c1c1c;">4 MB</div>
<svg style="position:absolute;left:523px;top:371.645px" width="9" height="11" viewBox="0 0 9 11"><path d="M.5 .5 L6 .5 L8.5 3 L8.5 10.5 L.5 10.5Z" fill="#fafafa" stroke="#999" stroke-width="1"/></svg>
<div style="position:absolute;left:472.45px;top:370.00px;font-size:9.4px;line-height:12px;font-weight:400;color:#1c1c1c;white-space:pre;-webkit-text-stroke:0.2px #1c1c1c;">Schandmaul - Schelme-Winterabend.mp3</div>
<div style="position:absolute;left:852.11px;top:370.00px;font-size:9.4px;line-height:12px;font-weight:400;color:#1c1c1c;white-space:pre;-webkit-text-stroke:0.2px #1c1c1c;">3 MB</div>
<svg style="position:absolute;left:523px;top:384.49px" width="9" height="11" viewBox="0 0 9 11"><path d="M.5 .5 L6 .5 L8.5 3 L8.5 10.5 L.5 10.5Z" fill="#fafafa" stroke="#999" stroke-width="1"/></svg>
<div style="position:absolute;left:501.39px;top:383.00px;font-size:9.4px;line-height:12px;font-weight:400;color:#1c1c1c;white-space:pre;-webkit-text-stroke:0.2px #1c1c1c;">Lost Prophets - Living A Boy&#x27;s Adventure Tale....</div>
<div style="position:absolute;left:852.11px;top:383.00px;font-size:9.4px;line-height:12px;font-weight:400;color:#1c1c1c;white-space:pre;-webkit-text-stroke:0.2px #1c1c1c;">6 MB</div>
<svg style="position:absolute;left:523px;top:397.33500000000004px" width="9" height="11" viewBox="0 0 9 11"><path d="M.5 .5 L6 .5 L8.5 3 L8.5 10.5 L.5 10.5Z" fill="#fafafa" stroke="#999" stroke-width="1"/></svg>
<div style="position:absolute;left:529.16px;top:396.00px;font-size:9.4px;line-height:12px;font-weight:400;color:#1c1c1c;white-space:pre;-webkit-text-stroke:0.2px #1c1c1c;">Angra - Love Is Reason.mp3</div>
<div style="position:absolute;left:852.11px;top:396.00px;font-size:9.4px;line-height:12px;font-weight:400;color:#1c1c1c;white-space:pre;-webkit-text-stroke:0.2px #1c1c1c;">4 MB</div>
<div style="position:absolute;left:482px;top:409.2px;width:394px;height:12.9px;background:linear-gradient(#d8662f,#c95a28);"></div>
<svg style="position:absolute;left:523px;top:410.18000000000006px" width="9" height="11" viewBox="0 0 9 11"><path d="M.5 .5 L6 .5 L8.5 3 L8.5 10.5 L.5 10.5Z" fill="#f0c8b8" stroke="#e8b8a8" stroke-width="1"/></svg>
<div style="position:absolute;left:536.80px;top:409.00px;font-size:9.4px;line-height:12px;font-weight:400;color:#f7ece4;white-space:pre;-webkit-text-stroke:0.2px #f7ece4;letter-spacing:-0.036px;">a-ha - Take On Me.mp3</div>
<div style="position:absolute;left:852.11px;top:409.00px;font-size:9.4px;line-height:12px;font-weight:400;color:#f7ece4;white-space:pre;-webkit-text-stroke:0.2px #f7ece4;">5 MB</div>
<svg style="position:absolute;left:510px;top:423.525px" width="11" height="11" viewBox="0 0 11 11"><path d="M.6 9.6 L.6 .6 L4.4 .6 L5.4 1.9 L9.8 1.9 L9.8 9.6Z" fill="#c0c2aa" stroke="#6d6e5e" stroke-width="1.1"/><rect x="1.1" y="2.4" width="8.2" height="1.7" fill="#8e907d"/><rect x="1.1" y="4.1" width="8.2" height=".6" fill="#d8dac8"/></svg>
<div style="position:absolute;left:524.00px;top:422.00px;font-size:9.4px;line-height:12px;font-weight:400;color:#1c1c1c;white-space:pre;-webkit-text-stroke:0.2px #1c1c1c;">ubuntu</div>
<svg style="position:absolute;left:487px;top:436.97px" width="6" height="9" viewBox="0 0 6 9"><path d="M1.4 1.3 L4.4 4 L1.4 6.7Z" fill="#fff" stroke="#2a2a2a" stroke-width="1" stroke-linejoin="round"/></svg>
<svg style="position:absolute;left:497.2px;top:436.37px" width="11" height="11" viewBox="0 0 11 11"><path d="M.6 9.6 L.6 .6 L4.4 .6 L5.4 1.9 L9.8 1.9 L9.8 9.6Z" fill="#c0c2aa" stroke="#6d6e5e" stroke-width="1.1"/><rect x="1.1" y="2.4" width="8.2" height="1.7" fill="#8e907d"/><rect x="1.1" y="4.1" width="8.2" height=".6" fill="#d8dac8"/></svg>
<div style="position:absolute;left:511.00px;top:435.00px;font-size:9.4px;line-height:12px;font-weight:400;color:#1c1c1c;white-space:pre;-webkit-text-stroke:0.2px #1c1c1c;">lib</div>
<svg style="position:absolute;left:497.2px;top:449.21500000000003px" width="11" height="11" viewBox="0 0 11 11"><path d="M.6 9.6 L.6 .6 L4.4 .6 L5.4 1.9 L9.8 1.9 L9.8 9.6Z" fill="#c0c2aa" stroke="#6d6e5e" stroke-width="1.1"/><rect x="1.1" y="2.4" width="8.2" height="1.7" fill="#8e907d"/><rect x="1.1" y="4.1" width="8.2" height=".6" fill="#d8dac8"/></svg>
<div style="position:absolute;left:511.00px;top:448.00px;font-size:9.4px;line-height:12px;font-weight:400;color:#1c1c1c;white-space:pre;-webkit-text-stroke:0.2px #1c1c1c;">lost+found</div>
<svg style="position:absolute;left:487px;top:462.66px" width="6" height="9" viewBox="0 0 6 9"><path d="M1.4 1.3 L4.4 4 L1.4 6.7Z" fill="#fff" stroke="#2a2a2a" stroke-width="1" stroke-linejoin="round"/></svg>
<svg style="position:absolute;left:497.2px;top:462.06000000000006px" width="11" height="11" viewBox="0 0 11 11"><path d="M.6 9.6 L.6 .6 L4.4 .6 L5.4 1.9 L9.8 1.9 L9.8 9.6Z" fill="#c0c2aa" stroke="#6d6e5e" stroke-width="1.1"/><rect x="1.1" y="2.4" width="8.2" height="1.7" fill="#8e907d"/><rect x="1.1" y="4.1" width="8.2" height=".6" fill="#d8dac8"/></svg>
<div style="position:absolute;left:511.00px;top:461.00px;font-size:9.4px;line-height:12px;font-weight:400;color:#1c1c1c;white-space:pre;-webkit-text-stroke:0.2px #1c1c1c;">media</div>
<svg style="position:absolute;left:497.2px;top:474.905px" width="11" height="11" viewBox="0 0 11 11"><path d="M.6 9.6 L.6 .6 L4.4 .6 L5.4 1.9 L9.8 1.9 L9.8 9.6Z" fill="#c0c2aa" stroke="#6d6e5e" stroke-width="1.1"/><rect x="1.1" y="2.4" width="8.2" height="1.7" fill="#8e907d"/><rect x="1.1" y="4.1" width="8.2" height=".6" fill="#d8dac8"/></svg>
<div style="position:absolute;left:511.00px;top:474.00px;font-size:9.4px;line-height:12px;font-weight:400;color:#1c1c1c;white-space:pre;-webkit-text-stroke:0.2px #1c1c1c;">mnt</div>
<svg style="position:absolute;left:487px;top:488.35px" width="6" height="9" viewBox="0 0 6 9"><path d="M1.4 1.3 L4.4 4 L1.4 6.7Z" fill="#fff" stroke="#2a2a2a" stroke-width="1" stroke-linejoin="round"/></svg>
<svg style="position:absolute;left:497.2px;top:487.75px" width="11" height="11" viewBox="0 0 11 11"><path d="M.6 9.6 L.6 .6 L4.4 .6 L5.4 1.9 L9.8 1.9 L9.8 9.6Z" fill="#c0c2aa" stroke="#6d6e5e" stroke-width="1.1"/><rect x="1.1" y="2.4" width="8.2" height="1.7" fill="#8e907d"/><rect x="1.1" y="4.1" width="8.2" height=".6" fill="#d8dac8"/></svg>
<div style="position:absolute;left:511.00px;top:487.00px;font-size:9.4px;line-height:12px;font-weight:400;color:#1c1c1c;white-space:pre;-webkit-text-stroke:0.2px #1c1c1c;">opt</div>
<svg style="position:absolute;left:487px;top:501.195px" width="6" height="9" viewBox="0 0 6 9"><path d="M1.4 1.3 L4.4 4 L1.4 6.7Z" fill="#fff" stroke="#2a2a2a" stroke-width="1" stroke-linejoin="round"/></svg>
<svg style="position:absolute;left:497.2px;top:500.595px" width="11" height="11" viewBox="0 0 11 11"><path d="M.6 9.6 L.6 .6 L4.4 .6 L5.4 1.9 L9.8 1.9 L9.8 9.6Z" fill="#c0c2aa" stroke="#6d6e5e" stroke-width="1.1"/><rect x="1.1" y="2.4" width="8.2" height="1.7" fill="#8e907d"/><rect x="1.1" y="4.1" width="8.2" height=".6" fill="#d8dac8"/></svg>
<div style="position:absolute;left:511.00px;top:500.00px;font-size:9.4px;line-height:12px;font-weight:400;color:#1c1c1c;white-space:pre;-webkit-text-stroke:0.2px #1c1c1c;">proc</div>
<svg style="position:absolute;left:497.2px;top:513.44px" width="11" height="11" viewBox="0 0 11 11"><path d="M.6 9.6 L.6 .6 L4.4 .6 L5.4 1.9 L9.8 1.9 L9.8 9.6Z" fill="#c0c2aa" stroke="#6d6e5e" stroke-width="1.1"/><rect x="1.1" y="2.4" width="8.2" height="1.7" fill="#8e907d"/><rect x="1.1" y="4.1" width="8.2" height=".6" fill="#d8dac8"/></svg>
<div style="position:absolute;left:511.00px;top:513.00px;font-size:9.4px;line-height:12px;font-weight:400;color:#1c1c1c;white-space:pre;-webkit-text-stroke:0.2px #1c1c1c;">raidmnt</div>
<svg style="position:absolute;left:497.2px;top:526.2850000000001px" width="11" height="11" viewBox="0 0 11 11"><path d="M.6 9.6 L.6 .6 L4.4 .6 L5.4 1.9 L9.8 1.9 L9.8 9.6Z" fill="#c0c2aa" stroke="#6d6e5e" stroke-width="1.1"/><rect x="1.1" y="2.4" width="8.2" height="1.7" fill="#8e907d"/><rect x="1.1" y="4.1" width="8.2" height=".6" fill="#d8dac8"/></svg>
<div style="position:absolute;left:511.00px;top:526.00px;font-size:9.4px;line-height:12px;font-weight:400;color:#1c1c1c;white-space:pre;-webkit-text-stroke:0.2px #1c1c1c;">root</div>
<svg style="position:absolute;left:497.2px;top:539.13px" width="11" height="11" viewBox="0 0 11 11"><path d="M.6 9.6 L.6 .6 L4.4 .6 L5.4 1.9 L9.8 1.9 L9.8 9.6Z" fill="#c0c2aa" stroke="#6d6e5e" stroke-width="1.1"/><rect x="1.1" y="2.4" width="8.2" height="1.7" fill="#8e907d"/><rect x="1.1" y="4.1" width="8.2" height=".6" fill="#d8dac8"/></svg>
<div style="position:absolute;left:511.00px;top:539.00px;font-size:9.4px;line-height:12px;font-weight:400;color:#1c1c1c;white-space:pre;-webkit-text-stroke:0.2px #1c1c1c;">sbin</div>
<svg style="position:absolute;left:497.2px;top:551.975px" width="11" height="11" viewBox="0 0 11 11"><path d="M.6 9.6 L.6 .6 L4.4 .6 L5.4 1.9 L9.8 1.9 L9.8 9.6Z" fill="#c0c2aa" stroke="#6d6e5e" stroke-width="1.1"/><rect x="1.1" y="2.4" width="8.2" height="1.7" fill="#8e907d"/><rect x="1.1" y="4.1" width="8.2" height=".6" fill="#d8dac8"/></svg>
<div style="position:absolute;left:511.00px;top:551.00px;font-size:9.4px;line-height:12px;font-weight:400;color:#1c1c1c;white-space:pre;-webkit-text-stroke:0.2px #1c1c1c;">selinux</div>
<svg style="position:absolute;left:487px;top:565.4200000000001px" width="6" height="9" viewBox="0 0 6 9"><path d="M1.4 1.3 L4.4 4 L1.4 6.7Z" fill="#fff" stroke="#2a2a2a" stroke-width="1" stroke-linejoin="round"/></svg>
<svg style="position:absolute;left:497.2px;top:564.82px" width="11" height="11" viewBox="0 0 11 11"><path d="M.6 9.6 L.6 .6 L4.4 .6 L5.4 1.9 L9.8 1.9 L9.8 9.6Z" fill="#c0c2aa" stroke="#6d6e5e" stroke-width="1.1"/><rect x="1.1" y="2.4" width="8.2" height="1.7" fill="#8e907d"/><rect x="1.1" y="4.1" width="8.2" height=".6" fill="#d8dac8"/></svg>
<div style="position:absolute;left:511.00px;top:564.00px;font-size:9.4px;line-height:12px;font-weight:400;color:#1c1c1c;white-space:pre;-webkit-text-stroke:0.2px #1c1c1c;">srv</div>
<svg style="position:absolute;left:487px;top:578.2650000000001px" width="6" height="9" viewBox="0 0 6 9"><path d="M1.4 1.3 L4.4 4 L1.4 6.7Z" fill="#fff" stroke="#2a2a2a" stroke-width="1" stroke-linejoin="round"/></svg>
<svg style="position:absolute;left:497.2px;top:577.6650000000001px" width="11" height="11" viewBox="0 0 11 11"><path d="M.6 9.6 L.6 .6 L4.4 .6 L5.4 1.9 L9.8 1.9 L9.8 9.6Z" fill="#c0c2aa" stroke="#6d6e5e" stroke-width="1.1"/><rect x="1.1" y="2.4" width="8.2" height="1.7" fill="#8e907d"/><rect x="1.1" y="4.1" width="8.2" height=".6" fill="#d8dac8"/></svg>
<div style="position:absolute;left:511.00px;top:577.00px;font-size:9.4px;line-height:12px;font-weight:400;color:#1c1c1c;white-space:pre;-webkit-text-stroke:0.2px #1c1c1c;">sys</div>
<svg style="position:absolute;left:487px;top:591.11px" width="6" height="9" viewBox="0 0 6 9"><path d="M1.4 1.3 L4.4 4 L1.4 6.7Z" fill="#fff" stroke="#2a2a2a" stroke-width="1" stroke-linejoin="round"/></svg>
<svg style="position:absolute;left:497.2px;top:590.51px" width="11" height="11" viewBox="0 0 11 11"><path d="M.6 9.6 L.6 .6 L4.4 .6 L5.4 1.9 L9.8 1.9 L9.8 9.6Z" fill="#c0c2aa" stroke="#6d6e5e" stroke-width="1.1"/><rect x="1.1" y="2.4" width="8.2" height="1.7" fill="#8e907d"/><rect x="1.1" y="4.1" width="8.2" height=".6" fill="#d8dac8"/></svg>
<div style="position:absolute;left:511.00px;top:590.00px;font-size:9.4px;line-height:12px;font-weight:400;color:#1c1c1c;white-space:pre;-webkit-text-stroke:0.2px #1c1c1c;">tmp</div>
<svg style="position:absolute;left:487px;top:603.955px" width="6" height="9" viewBox="0 0 6 9"><path d="M1.4 1.3 L4.4 4 L1.4 6.7Z" fill="#fff" stroke="#2a2a2a" stroke-width="1" stroke-linejoin="round"/></svg>
<svg style="position:absolute;left:497.2px;top:603.355px" width="11" height="11" viewBox="0 0 11 11"><path d="M.6 9.6 L.6 .6 L4.4 .6 L5.4 1.9 L9.8 1.9 L9.8 9.6Z" fill="#c0c2aa" stroke="#6d6e5e" stroke-width="1.1"/><rect x="1.1" y="2.4" width="8.2" height="1.7" fill="#8e907d"/><rect x="1.1" y="4.1" width="8.2" height=".6" fill="#d8dac8"/></svg>
<div style="position:absolute;left:511.00px;top:603.00px;font-size:9.4px;line-height:12px;font-weight:400;color:#1c1c1c;white-space:pre;-webkit-text-stroke:0.2px #1c1c1c;">usr</div>
<svg style="position:absolute;left:487px;top:616.8000000000001px" width="6" height="9" viewBox="0 0 6 9"><path d="M1.4 1.3 L4.4 4 L1.4 6.7Z" fill="#fff" stroke="#2a2a2a" stroke-width="1" stroke-linejoin="round"/></svg>
<svg style="position:absolute;left:497.2px;top:616.2px" width="11" height="11" viewBox="0 0 11 11"><path d="M.6 9.6 L.6 .6 L4.4 .6 L5.4 1.9 L9.8 1.9 L9.8 9.6Z" fill="#c0c2aa" stroke="#6d6e5e" stroke-width="1.1"/><rect x="1.1" y="2.4" width="8.2" height="1.7" fill="#8e907d"/><rect x="1.1" y="4.1" width="8.2" height=".6" fill="#d8dac8"/></svg>
<div style="position:absolute;left:511.00px;top:615.00px;font-size:9.4px;line-height:12px;font-weight:400;color:#1c1c1c;white-space:pre;-webkit-text-stroke:0.2px #1c1c1c;">var</div>
<div style="position:absolute;left:879px;top:100px;width:12px;height:537px;box-sizing:border-box;background:#aaa69f;border:1px solid #8f8b85;border-radius:2px;"></div>
<svg style="position:absolute;left:881px;top:103px" width="8" height="6" viewBox="0 0 8 6"><path d="M1.5 4.5 L4 2 L6.5 4.5" stroke="#555" stroke-width="1" fill="none"/></svg>
<div style="position:absolute;left:881px;top:355px;width:8.5px;height:272px;background:#55524c;border-radius:3px;"></div>
<svg style="position:absolute;left:881px;top:628px" width="8" height="6" viewBox="0 0 8 6"><path d="M1.5 1.5 L4 4 L6.5 1.5" stroke="#777" stroke-width="1" fill="none"/></svg>
<div style="position:absolute;left:423px;top:448.3px;width:53.5px;height:16.2px;box-sizing:border-box;background:linear-gradient(#e6e3df,#d6d2cd);border:1px solid #75716b;border-radius:3px;"></div>
<div style="position:absolute;left:443.75px;top:451.00px;font-size:9.4px;line-height:12px;font-weight:400;color:#222;white-space:pre;-webkit-text-stroke:0.2px #222;letter-spacing:1.547px;">&lt;&lt;</div>
<div style="position:absolute;left:333px;top:242px;width:233px;height:174px;box-sizing:border-box;background:#a9a59f;border:1px solid #3a3835;border-bottom:2px solid #3f3c38;border-top:none;border-radius:6px 6px 2px 2px;box-shadow:1px 1px 1px rgba(0,0,0,.35);"></div>
<div style="position:absolute;left:333px;top:242px;width:233px;height:18px;background:linear-gradient(#3e3c38,#2f2d2a);border-radius:6px 6px 0 0;"></div>
<div style="position:absolute;left:334px;top:260px;width:1px;height:154px;background:#5a5853;"></div>
<div style="position:absolute;left:564px;top:260px;width:1px;height:154px;background:#5a5853;"></div>
<svg style="position:absolute;left:339px;top:246.3px" width="11" height="10" viewBox="0 0 16 15"><defs><radialGradient id="hb339_246_3" cx=".45" cy=".85" r=".55"><stop offset="0" stop-color="#2a6cff"/><stop offset="1" stop-color="#1010d0" stop-opacity="0"/></radialGradient></defs><rect width="16" height="15" fill="#1212c8"/><ellipse cx="4.5" cy="6.5" rx="3.5" ry="3.5" fill="#0c0c80" opacity=".6"/><ellipse cx="10" cy="4" rx="3" ry="2.5" fill="#2a3ae0" opacity=".6"/><rect width="16" height="15" fill="url(#hb339_246_3)"/><path d="M9 10.5 L11.5 12 L9 13.5Z" fill="#4aa0ff" opacity=".8"/><path d="M11 0 L16 5 L13.8 5 L13.8 8.5 L8.5 8.5 L8.5 5 L6 5Z" fill="#fa4848"/></svg>
<div style="position:absolute;left:356.30px;top:246.00px;font-size:9.9px;line-height:12px;font-weight:700;color:#dcd8d0;white-space:pre;letter-spacing:0.153px;">Track upload - QHiMDTransfer</div>
<svg style="position:absolute;left:550px;top:247px" width="8" height="8" viewBox="0 0 8 8"><circle cx="4" cy="4" r="3" fill="none" stroke="#8a8782" stroke-width="1"/></svg>
<svg style="position:absolute;left:342px;top:268px" width="16" height="15" viewBox="0 0 16 15"><defs><radialGradient id="hb342_268" cx=".45" cy=".85" r=".55"><stop offset="0" stop-color="#2a6cff"/><stop offset="1" stop-color="#1010d0" stop-opacity="0"/></radialGradient></defs><rect width="16" height="15" fill="#1212c8"/><ellipse cx="4.5" cy="6.5" rx="3.5" ry="3.5" fill="#0c0c80" opacity=".6"/><ellipse cx="10" cy="4" rx="3" ry="2.5" fill="#2a3ae0" opacity=".6"/><rect width="16" height="15" fill="url(#hb342_268)"/><path d="M9 10.5 L11.5 12 L9 13.5Z" fill="#4aa0ff" opacity=".8"/><path d="M11 0 L16 5 L13.8 5 L13.8 8.5 L8.5 8.5 L8.5 5 L6 5Z" fill="#fa4848"/></svg>
<div style="position:absolute;left:369.70px;top:270.00px;font-size:9.9px;line-height:12px;font-weight:700;color:#111;white-space:pre;letter-spacing:0.070px;">please wait while uploading 1 track(s)</div>
<div style="position:absolute;left:342.00px;top:286.00px;font-size:9.4px;line-height:12px;font-weight:400;color:#222;white-space:pre;-webkit-text-stroke:0.2px #222;">overall progress</div>
<div style="position:absolute;left:342px;top:302.3px;width:215.5px;height:16.6px;box-sizing:border-box;background:linear-gradient(#a29e98,#aaa6a0);border:1px solid #8c8882;border-radius:3px;"></div>
<div style="position:absolute;left:342px;top:302.3px;width:63.2px;height:16.6px;box-sizing:border-box;background:repeating-linear-gradient(-41deg,#c8622e 0px,#c0602e 5px,#a6542c 11px,#a6542c 14px,#c8622e 23px);border:1px solid #9a4a26;border-radius:3px;"></div>
<div style="position:absolute;left:440.62px;top:304.00px;font-size:9.4px;line-height:12px;font-weight:400;color:#1a1a1a;white-space:pre;-webkit-text-stroke:0.2px #1a1a1a;">29%</div>
<div style="position:absolute;left:342.00px;top:322.00px;font-size:9.4px;line-height:12px;font-weight:400;color:#1a1a1a;white-space:pre;-webkit-text-stroke:0.2px #1a1a1a;letter-spacing:-0.024px;">current track: 1 - Axel Rudi Pell - Dreams of Passion</div>
<div style="position:absolute;left:342px;top:338.4px;width:215.5px;height:16.6px;box-sizing:border-box;background:linear-gradient(#a29e98,#aaa6a0);border:1px solid #8c8882;border-radius:3px;"></div>
<div style="position:absolute;left:342px;top:338.4px;width:65.3px;height:16.6px;box-sizing:border-box;background:repeating-linear-gradient(-41deg,#c8622e 0px,#c0602e 5px,#a6542c 11px,#a6542c 14px,#c8622e 23px);border:1px solid #9a4a26;border-radius:3px;"></div>
<div style="position:absolute;left:440.62px;top:340.00px;font-size:9.4px;line-height:12px;font-weight:400;color:#1a1a1a;white-space:pre;-webkit-text-stroke:0.2px #1a1a1a;">30%</div>
<svg style="position:absolute;left:342px;top:338px" width="66" height="17" viewBox="0 0 66 17"><path d="M17.3 16.5 L21.8 16.5 L36 .5 L31.1 .5Z M50.2 16.5 L55 16.5 L65.3 4.5 L65.3 .5 L60.9 .5Z" fill="#fbecc0"/></svg>
<div style="position:absolute;left:342.5px;top:391px;width:97px;height:15px;box-sizing:border-box;background:linear-gradient(#e4e1de,#d2cecb);border:1px solid #86827c;border-radius:3px;"></div>
<div style="position:absolute;left:364.50px;top:393.00px;font-size:9.4px;line-height:12px;font-weight:400;color:#5a5854;white-space:pre;-webkit-text-stroke:0.2px #5a5854;letter-spacing:-0.156px;">Show Details</div>
<div style="position:absolute;left:460.5px;top:391px;width:96px;height:15px;box-sizing:border-box;background:linear-gradient(#d8ccc8,#c8bbb6);border:1px solid #6f6560;border-radius:3px;"></div>
<div style="position:absolute;left:494.00px;top:393.00px;font-size:9.4px;line-height:12px;font-weight:400;color:#222;white-space:pre;-webkit-text-stroke:0.2px #222;letter-spacing:-0.037px;">Cancel</div>
<svg style="position:absolute;left:461px;top:281px" width="8" height="12" viewBox="0 0 8 12"><path d="M.5 .5 L.5 10 L3 7.8 L4.8 11.5 L6.2 10.8 L4.5 7.2 L7.5 7.2Z" fill="#fff" stroke="#000" stroke-width=".8"/></svg>
<div style="position:absolute;left:0px;top:659px;width:900px;height:16px;background:#2c2a27;border-top:1px solid #1b1a18;"></div>
<svg style="position:absolute;left:2px;top:661px" width="12" height="12" viewBox="0 0 12 12"><rect x=".5" y=".5" width="11" height="11" fill="#d8d4ce"/><rect x="2" y="2" width="8" height="8" fill="#a8101a"/><rect x="3" y="6" width="2" height="1" fill="#eee"/></svg>
<svg style="position:absolute;left:18px;top:663px" width="3" height="9" viewBox="0 0 3 9"><rect y="0" width="3" height="1" fill="#555"/><rect y="3" width="3" height="1" fill="#555"/><rect y="6" width="3" height="1" fill="#555"/></svg>
<svg style="position:absolute;left:26px;top:663px" width="3" height="9" viewBox="0 0 3 9"><rect y="0" width="3" height="1" fill="#555"/><rect y="3" width="3" height="1" fill="#555"/><rect y="6" width="3" height="1" fill="#555"/></svg>
<div style="position:absolute;left:30px;top:661px;width:69px;height:14px;box-sizing:border-box;background:#2f2d2a;border:1px solid #3c3a36;border-bottom:none;border-radius:2px 2px 0 0;"></div>
<svg style="position:absolute;left:35px;top:662px" width="11" height="11" viewBox="0 0 11 11"><circle cx="5.5" cy="5.5" r="5.2" fill="#e8661f"/><circle cx="6.5" cy="4.5" r="3" fill="#3c8fd6"/><path d="M.5 6 Q2 10.5 6 10.5 Q10 9.5 10.5 5.5 Q9 8.5 6 8 Q3 7.5 4 4 Q1.5 4 .5 6Z" fill="#f08a22"/></svg>
<div style="position:absolute;left:50.00px;top:661.00px;font-size:9.4px;line-height:12px;font-weight:400;color:#dedad2;white-space:pre;-webkit-text-stroke:0.2px #dedad2;">tasks [li...</div>
<div style="position:absolute;left:101px;top:661px;width:69px;height:14px;box-sizing:border-box;background:#2f2d2a;border:1px solid #3c3a36;border-bottom:none;border-radius:2px 2px 0 0;"></div>
<svg style="position:absolute;left:106px;top:662px" width="12" height="11" viewBox="0 0 12 11"><circle cx="6" cy="5.5" r="5.2" fill="#3060b0"/><path d="M1.5 5.5 L9.5 4.5 L10.5 9 L3 10Z" fill="#f0d8a0"/></svg>
<div style="position:absolute;left:121.00px;top:661.00px;font-size:9.4px;line-height:12px;font-weight:400;color:#dedad2;white-space:pre;-webkit-text-stroke:0.2px #dedad2;">Inbox for...</div>
<div style="position:absolute;left:173px;top:661px;width:68px;height:14px;box-sizing:border-box;background:#2f2d2a;border:1px solid #3c3a36;border-bottom:none;border-radius:2px 2px 0 0;"></div>
<svg style="position:absolute;left:177px;top:662px" width="11" height="11" viewBox="0 0 11 11"><rect width="11" height="11" fill="#4a3a30"/><rect x="0" y="0" width="5" height="3" fill="#6a9a70"/><rect x="5" y="0" width="6" height="2" fill="#7a8aa0"/><circle cx="5.5" cy="5" r="3.2" fill="#3a2418"/><ellipse cx="5" cy="7" rx="2.4" ry="2.2" fill="#8a4a30"/><path d="M5 11 L7 7 L11 6 L11 11Z" fill="#a81820"/><rect x="0" y="3" width="2" height="8" fill="#c8c0b0" opacity=".6"/></svg>
<div style="position:absolute;left:193.00px;top:661.00px;font-size:9.4px;line-height:12px;font-weight:400;color:#dedad2;white-space:pre;-webkit-text-stroke:0.2px #dedad2;">Michi (M...</div>
<div style="position:absolute;left:243px;top:661px;width:69px;height:14px;box-sizing:border-box;background:#2f2d2a;border:1px solid #3c3a36;border-bottom:none;border-radius:2px 2px 0 0;"></div>
<svg style="position:absolute;left:248px;top:662px" width="12" height="12" viewBox="0 0 12 12"><circle cx="6" cy="6" r="5.5" fill="#5c8a1c"/><path d="M2.5 4.5 Q6 3.3 9.5 5 M3 6.5 Q6 5.6 9 7 M3.5 8.5 Q6 7.8 8.5 9" stroke="#1c2a08" stroke-width="1" fill="none"/></svg>
<div style="position:absolute;left:263.00px;top:661.00px;font-size:9.4px;line-height:12px;font-weight:400;color:#dedad2;white-space:pre;-webkit-text-stroke:0.2px #dedad2;">[Spotify]</div>
<div style="position:absolute;left:314px;top:661px;width:69px;height:14px;box-sizing:border-box;background:#2f2d2a;border:1px solid #3c3a36;border-bottom:none;border-radius:2px 2px 0 0;"></div>
<svg style="position:absolute;left:319px;top:663px" width="10" height="9" viewBox="0 0 10 9"><rect x=".2" y=".3" width="8.8" height="7.6" fill="#e4e4e0"/><rect x=".2" y=".3" width="8.8" height="2.2" fill="#5a86d0"/><rect x=".2" y="2.5" width="8.8" height=".6" fill="#a8c0e0"/></svg>
<div style="position:absolute;left:334.00px;top:661.00px;font-size:9.4px;line-height:12px;font-weight:400;color:#dedad2;white-space:pre;-webkit-text-stroke:0.2px #dedad2;">xterm</div>
<div style="position:absolute;left:385px;top:661px;width:69px;height:14px;box-sizing:border-box;background:#2f2d2a;border:1px solid #3c3a36;border-bottom:none;border-radius:2px 2px 0 0;"></div>
<svg style="position:absolute;left:390px;top:663px" width="10" height="9" viewBox="0 0 10 9"><rect x=".2" y=".3" width="8.8" height="7.6" fill="#e4e4e0"/><rect x=".2" y=".3" width="8.8" height="2.2" fill="#5a86d0"/><rect x=".2" y="2.5" width="8.8" height=".6" fill="#a8c0e0"/></svg>
<div style="position:absolute;left:405.00px;top:661.00px;font-size:9.4px;line-height:12px;font-weight:400;color:#dedad2;white-space:pre;-webkit-text-stroke:0.2px #dedad2;">xterm</div>
<div style="position:absolute;left:456px;top:661px;width:69px;height:14px;box-sizing:border-box;background:#2f2d2a;border:1px solid #3c3a36;border-bottom:none;border-radius:2px 2px 0 0;"></div>
<svg style="position:absolute;left:461px;top:662px" width="11" height="12" viewBox="0 0 11 12"><path d="M1.5 11.5 Q.5 4 5.5 1.5 Q10 2.5 10 8 L10.5 11.5Z" fill="#7a5a98"/><circle cx="4" cy="5" r="1.2" fill="#fff"/><circle cx="7" cy="5" r="1.2" fill="#fff"/><path d="M5 7.5 L8.5 7 L7.5 9.5Z" fill="#e8922a"/></svg>
<div style="position:absolute;left:476.00px;top:661.00px;font-size:9.4px;line-height:12px;font-weight:400;color:#dedad2;white-space:pre;-webkit-text-stroke:0.2px #dedad2;">Buddy List</div>
<div style="position:absolute;left:527px;top:661px;width:70px;height:14px;box-sizing:border-box;background:#2f2d2a;border:1px solid #3c3a36;border-bottom:none;border-radius:2px 2px 0 0;"></div>
<svg style="position:absolute;left:532px;top:663px" width="10" height="9" viewBox="0 0 10 9"><rect x=".2" y=".3" width="8.8" height="7.6" fill="#e4e4e0"/><rect x=".2" y=".3" width="8.8" height="2.2" fill="#5a86d0"/><rect x=".2" y="2.5" width="8.8" height=".6" fill="#a8c0e0"/></svg>
<div style="position:absolute;left:547.00px;top:661.00px;font-size:9.4px;line-height:12px;font-weight:400;color:#dedad2;white-space:pre;-webkit-text-stroke:0.2px #dedad2;">xterm</div>
<div style="position:absolute;left:599px;top:661px;width:68px;height:14px;box-sizing:border-box;background:#2f2d2a;border:1px solid #3c3a36;border-bottom:none;border-radius:2px 2px 0 0;"></div>
<svg style="position:absolute;left:603px;top:662px" width="12" height="11" viewBox="0 0 16 15"><defs><radialGradient id="hb603_662" cx=".45" cy=".85" r=".55"><stop offset="0" stop-color="#2a6cff"/><stop offset="1" stop-color="#1010d0" stop-opacity="0"/></radialGradient></defs><rect width="16" height="15" fill="#1212c8"/><ellipse cx="4.5" cy="6.5" rx="3.5" ry="3.5" fill="#0c0c80" opacity=".6"/><ellipse cx="10" cy="4" rx="3" ry="2.5" fill="#2a3ae0" opacity=".6"/><rect width="16" height="15" fill="url(#hb603_662)"/><path d="M9 10.5 L11.5 12 L9 13.5Z" fill="#4aa0ff" opacity=".8"/><path d="M9 0 L13.5 0 L13.5 4.5 L16 4.5 L11 9 L7 4.5 L9 4.5Z" fill="#5ecc20"/></svg>
<div style="position:absolute;left:619.00px;top:661.00px;font-size:9.4px;line-height:12px;font-weight:400;color:#dedad2;white-space:pre;-webkit-text-stroke:0.2px #dedad2;">QHiMDTr...</div>
<div style="position:absolute;left:669px;top:661px;width:69px;height:14px;box-sizing:border-box;background:#2f2d2a;border:1px solid #3c3a36;border-bottom:none;border-radius:2px 2px 0 0;"></div>
<svg style="position:absolute;left:674px;top:663px" width="10" height="9" viewBox="0 0 10 9"><rect x=".2" y=".3" width="8.8" height="7.6" fill="#e4e4e0"/><rect x=".2" y=".3" width="8.8" height="2.2" fill="#5a86d0"/><rect x=".2" y="2.5" width="8.8" height=".6" fill="#a8c0e0"/></svg>
<div style="position:absolute;left:689.00px;top:661.00px;font-size:9.4px;line-height:12px;font-weight:400;color:#dedad2;white-space:pre;-webkit-text-stroke:0.2px #dedad2;">xterm</div>
<div style="position:absolute;left:741px;top:661px;width:69px;height:14px;box-sizing:border-box;background:#5f5c57;border:1px solid #6c6964;border-bottom:none;border-radius:2px 2px 0 0;"></div>
<svg style="position:absolute;left:746px;top:662px" width="12" height="11" viewBox="0 0 16 15"><defs><radialGradient id="hb746_662" cx=".45" cy=".85" r=".55"><stop offset="0" stop-color="#2a6cff"/><stop offset="1" stop-color="#1010d0" stop-opacity="0"/></radialGradient></defs><rect width="16" height="15" fill="#1212c8"/><ellipse cx="4.5" cy="6.5" rx="3.5" ry="3.5" fill="#0c0c80" opacity=".6"/><ellipse cx="10" cy="4" rx="3" ry="2.5" fill="#2a3ae0" opacity=".6"/><rect width="16" height="15" fill="url(#hb746_662)"/><path d="M9 10.5 L11.5 12 L9 13.5Z" fill="#4aa0ff" opacity=".8"/><path d="M11 0 L16 5 L13.8 5 L13.8 8.5 L8.5 8.5 L8.5 5 L6 5Z" fill="#fa4848"/></svg>
<div style="position:absolute;left:761.00px;top:661.00px;font-size:9.4px;line-height:12px;font-weight:400;color:#e8e4dc;white-space:pre;-webkit-text-stroke:0.2px #e8e4dc;">Track upl...</div>
<div style="position:absolute;left:813px;top:661px;width:17px;height:13px;box-sizing:border-box;background:#c8561e;border:1px solid #d8ccc6;"></div>
<svg style="position:absolute;left:815px;top:662px" width="13" height="11" viewBox="0 0 13 11"><rect x="0" y="0" width="13" height="11" fill="#c8561e"/><rect x="1" y=".5" width="11" height="10" fill="#1418d0"/><ellipse cx="6" cy="8" rx="4" ry="1.5" fill="#2a60f0"/><rect x="5" y="3.5" width="4" height="3" fill="#f0f0f0"/><rect x="6" y="4.3" width="2.2" height="1.5" fill="#e05030"/><path d="M8.5 .5 L11.5 .5 L11.5 3.5 Z" fill="#5cc020"/></svg>
<div style="position:absolute;left:830px;top:661px;width:17px;height:14px;box-sizing:border-box;background:#1f1d1b;border-left:1px solid #3a3835;"></div>
<div style="position:absolute;left:847px;top:661px;width:17px;height:14px;box-sizing:border-box;background:#1f1d1b;border-left:1px solid #3a3835;"></div>
<div style="position:absolute;left:864px;top:661px;width:18px;height:14px;box-sizing:border-box;background:#1f1d1b;border-left:1px solid #3a3835;"></div>
<svg style="position:absolute;left:884px;top:660px" width="16" height="15" viewBox="0 0 16 15"><rect x="1.5" y="0" width="14.5" height="3" fill="#a8a49c"/><rect x="1.5" y="0" width="14.5" height="1" fill="#d0ccc4"/><path d="M1 2.5 L16 2.5 L16 15 L2 15Z" fill="#e39a3a"/><path d="M1 2.5 L16 2.5 L16 5 L1 5Z" fill="#f0b050"/><path d="M6 8 L8.5 5.5 L10.5 8 M11.5 9 L10.5 12.5 L7.5 12.5 M5 12 L4.5 9" stroke="#fff8e8" stroke-width="1.3" fill="none"/></svg>
</body></html>
